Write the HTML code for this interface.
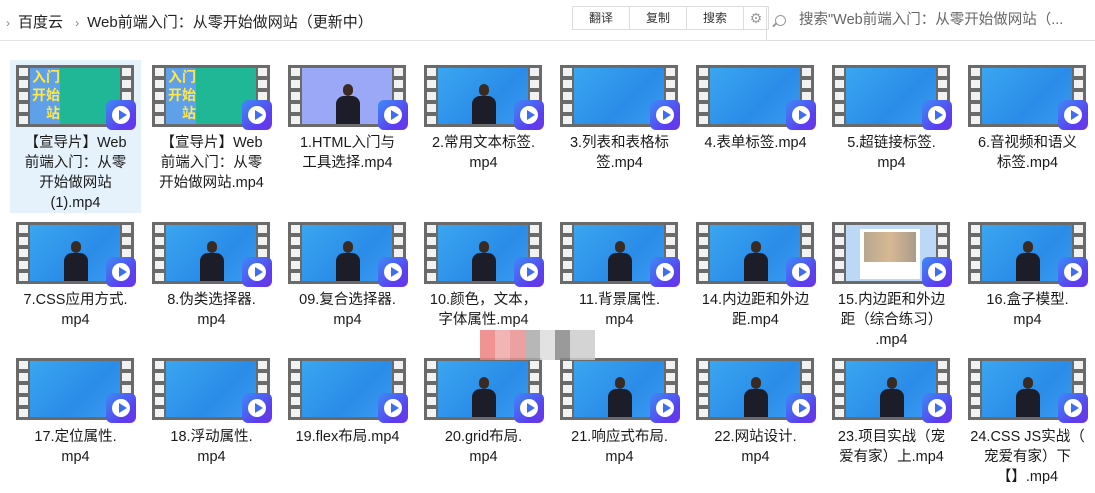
<!DOCTYPE html>
<html><head><meta charset="utf-8"><style>
*{margin:0;padding:0;box-sizing:border-box}
body{width:1095px;height:492px;background:#fff;font-family:"Liberation Sans","Noto Sans CJK SC",sans-serif;position:relative;overflow:hidden;color:#1a1a1a}
.bc{position:absolute;top:11px;left:6px;font-size:15px;color:#222}
.bc span.ch{color:#888;font-size:12px;margin:0 8px 0 0}
.hl{position:absolute;top:40px;left:0;width:1095px;height:1px;background:#e3e3e3}
.tb{position:absolute;top:6px;left:572px;height:24px;display:flex;border:1px solid #ddd;background:#fff}
.tb div{width:57px;font-size:12px;text-align:center;line-height:22px;border-right:1px solid #ddd;color:#333}
.tb div.g{width:24px;border-right:none;color:#999;font-size:14px}
.srch{position:absolute;top:6px;left:766px;width:330px;height:35px;border-left:1px solid #ddd;border-bottom:1px solid #ddd;font-size:14.5px;color:#666;line-height:28px;padding-left:32px}
.srch .mg{position:absolute;left:8px;top:9px;width:11px;height:11px;border:1.5px solid #999;border-radius:50%}
.srch .mg:after{content:"";position:absolute;left:-4px;top:8px;width:5px;height:1.5px;background:#999;transform:rotate(-45deg)}
.grid{position:absolute;left:10px;top:60px;display:grid;grid-template-columns:repeat(8,131px);column-gap:5px;row-gap:0}
.c{width:131px;height:157px;position:relative}
.c.sel{background:#e5f1fb;height:153px}
.r3 .c{height:140px}
.th{position:absolute;left:6px;top:5px;width:118px;height:62px;background:#6a6a6a}
.th .sl,.th .sr{position:absolute;top:3px;width:9px;height:58px;background:repeating-linear-gradient(#f2f2f2 0 8px,transparent 8px 12px)}
.th .sl{left:3px}.th .sr{right:3px}
.th .im{position:absolute;left:14px;top:3px;width:90px;height:56px;overflow:hidden;background:linear-gradient(135deg,#3aa6f0,#2a8ce8 60%,#3c9bf2)}
.im.lv{background:#9aa8f7}
.im.gr{background:#1fb795}
.im.gr:before{content:"入门\A开始\A站";white-space:pre;position:absolute;left:0;top:0;width:30px;height:56px;background:#5fa0e8;color:#ffe94a;font-weight:bold;font-size:14px;line-height:18px;text-align:right;overflow:hidden}
.im.doc{background:#bcd8f6}
.im.doc:before{content:"";position:absolute;left:14px;top:4px;width:60px;height:50px;background:#fff}
.im.doc:after{content:"";position:absolute;left:18px;top:7px;width:52px;height:30px;background:linear-gradient(90deg,#b7a890,#d8b894,#a99b8a)}
.p{position:absolute;left:34px;top:16px;width:24px;height:42px}
.p:before{content:"";position:absolute;left:7px;top:0;width:10px;height:12px;border-radius:5px;background:#3a2a22}
.p:after{content:"";position:absolute;left:0;top:12px;width:24px;height:30px;border-radius:8px 8px 0 0;background:#1c1d28}
.b{position:absolute;right:-2px;bottom:-3px;width:30px;height:30px;border-radius:6px;background:linear-gradient(135deg,#3b8df5,#5a3ff0 70%,#6b35e8)}
.b:before{content:"";position:absolute;left:6px;top:6px;width:18px;height:18px;border-radius:50%;background:#fff}
.b:after{content:"";position:absolute;left:13px;top:10px;border-left:8px solid #3f6ef2;border-top:5px solid transparent;border-bottom:5px solid transparent}
.t{position:absolute;top:73px;left:0;width:131px;text-align:center;font-size:14.5px;line-height:20px;color:#1a1a1a}
.r3 .t{top:74px}
.blur{position:absolute;left:480px;top:330px;width:115px;height:30px;background:linear-gradient(90deg,#ef8080 0 15px,#f0a8a8 15px 30px,#e89090 30px 45px,#aaa 45px 60px,#ddd 60px 75px,#888 75px 90px,#ccc 90px 115px);opacity:.85}
</style></head><body>
<div class="bc"><span class="ch">›</span>百度云 <span class="ch" style="margin-left:8px">›</span>Web前端入门：从零开始做网站（更新中）</div>
<div class="hl"></div>
<div class="tb"><div>翻译</div><div>复制</div><div>搜索</div><div class="g">⚙</div></div>
<div class="srch"><span class="mg"></span>搜索"Web前端入门：从零开始做网站（...</div>
<div class="grid">
<div class="c sel"><div class="th"><div class="sl"></div><div class="sr"></div><div class="im gr"></div><div class="b"></div></div><div class="t">【宣导片】Web<br>前端入门：从零<br>开始做网站<br>(1).mp4</div></div>
<div class="c"><div class="th"><div class="sl"></div><div class="sr"></div><div class="im gr"></div><div class="b"></div></div><div class="t">【宣导片】Web<br>前端入门：从零<br>开始做网站.mp4</div></div>
<div class="c"><div class="th"><div class="sl"></div><div class="sr"></div><div class="im lv"><div class="p"></div></div><div class="b"></div></div><div class="t">1.HTML入门与<br>工具选择.mp4</div></div>
<div class="c"><div class="th"><div class="sl"></div><div class="sr"></div><div class="im"><div class="p"></div></div><div class="b"></div></div><div class="t">2.常用文本标签.<br>mp4</div></div>
<div class="c"><div class="th"><div class="sl"></div><div class="sr"></div><div class="im"></div><div class="b"></div></div><div class="t">3.列表和表格标<br>签.mp4</div></div>
<div class="c"><div class="th"><div class="sl"></div><div class="sr"></div><div class="im"></div><div class="b"></div></div><div class="t">4.表单标签.mp4</div></div>
<div class="c"><div class="th"><div class="sl"></div><div class="sr"></div><div class="im"></div><div class="b"></div></div><div class="t">5.超链接标签.<br>mp4</div></div>
<div class="c"><div class="th"><div class="sl"></div><div class="sr"></div><div class="im"></div><div class="b"></div></div><div class="t">6.音视频和语义<br>标签.mp4</div></div>

<div class="c"><div class="th"><div class="sl"></div><div class="sr"></div><div class="im"><div class="p"></div></div><div class="b"></div></div><div class="t">7.CSS应用方式.<br>mp4</div></div>
<div class="c"><div class="th"><div class="sl"></div><div class="sr"></div><div class="im"><div class="p"></div></div><div class="b"></div></div><div class="t">8.伪类选择器.<br>mp4</div></div>
<div class="c"><div class="th"><div class="sl"></div><div class="sr"></div><div class="im"><div class="p"></div></div><div class="b"></div></div><div class="t">09.复合选择器.<br>mp4</div></div>
<div class="c"><div class="th"><div class="sl"></div><div class="sr"></div><div class="im"><div class="p"></div></div><div class="b"></div></div><div class="t">10.颜色，文本，<br>字体属性.mp4</div></div>
<div class="c"><div class="th"><div class="sl"></div><div class="sr"></div><div class="im"><div class="p"></div></div><div class="b"></div></div><div class="t">11.背景属性.<br>mp4</div></div>
<div class="c"><div class="th"><div class="sl"></div><div class="sr"></div><div class="im"><div class="p"></div></div><div class="b"></div></div><div class="t">14.内边距和外边<br>距.mp4</div></div>
<div class="c"><div class="th"><div class="sl"></div><div class="sr"></div><div class="im doc"></div><div class="b"></div></div><div class="t">15.内边距和外边<br>距（综合练习）<br>.mp4</div></div>
<div class="c"><div class="th"><div class="sl"></div><div class="sr"></div><div class="im"><div class="p"></div></div><div class="b"></div></div><div class="t">16.盒子模型.<br>mp4</div></div>
</div>
<div class="grid r3" style="top:353px">
<div class="c"><div class="th"><div class="sl"></div><div class="sr"></div><div class="im"></div><div class="b"></div></div><div class="t">17.定位属性.<br>mp4</div></div>
<div class="c"><div class="th"><div class="sl"></div><div class="sr"></div><div class="im"></div><div class="b"></div></div><div class="t">18.浮动属性.<br>mp4</div></div>
<div class="c"><div class="th"><div class="sl"></div><div class="sr"></div><div class="im"></div><div class="b"></div></div><div class="t">19.flex布局.mp4</div></div>
<div class="c"><div class="th"><div class="sl"></div><div class="sr"></div><div class="im"><div class="p"></div></div><div class="b"></div></div><div class="t">20.grid布局.<br>mp4</div></div>
<div class="c"><div class="th"><div class="sl"></div><div class="sr"></div><div class="im"><div class="p"></div></div><div class="b"></div></div><div class="t">21.响应式布局.<br>mp4</div></div>
<div class="c"><div class="th"><div class="sl"></div><div class="sr"></div><div class="im"><div class="p"></div></div><div class="b"></div></div><div class="t">22.网站设计.<br>mp4</div></div>
<div class="c"><div class="th"><div class="sl"></div><div class="sr"></div><div class="im"><div class="p"></div></div><div class="b"></div></div><div class="t">23.项目实战（宠<br>爱有家）上.mp4</div></div>
<div class="c"><div class="th"><div class="sl"></div><div class="sr"></div><div class="im"><div class="p"></div></div><div class="b"></div></div><div class="t">24.CSS JS实战（<br>宠爱有家）下<br>【】.mp4</div></div>
</div>
<div class="blur"></div>
</body></html>
